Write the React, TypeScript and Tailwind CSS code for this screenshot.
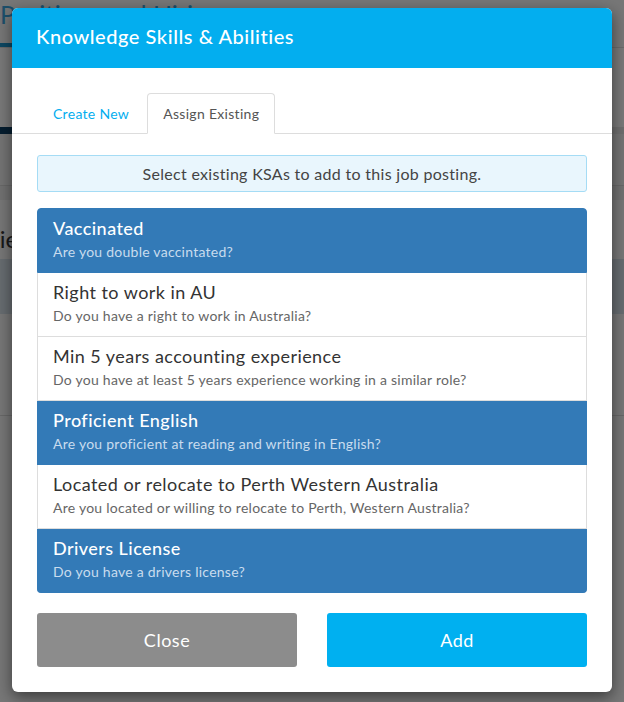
import React, { useState } from "react";

const ksas = [
  { title: "Vaccinated", question: "Are you double vaccintated?", selected: true },
  { title: "Right to work in AU", question: "Do you have a right to work in Australia?", selected: false },
  {
    title: "Min 5 years accounting experience",
    question: "Do you have at least 5 years experience working in a similar role?",
    selected: false,
  },
  {
    title: "Proficient English",
    question: "Are you proficient at reading and writing in English?",
    selected: true,
  },
  {
    title: "Located or relocate to Perth Western Australia",
    question: "Are you located or willing to relocate to Perth, Western Australia?",
    selected: false,
  },
  { title: "Drivers License", question: "Do you have a drivers license?", selected: true },
];

export default function App() {
  const [items, setItems] = useState(ksas);
  const [tab, setTab] = useState("existing");

  const toggle = (i: number) => {
    setItems(items.map((it, idx) => (idx === i ? { ...it, selected: !it.selected } : it)));
  };

  const tabClass = (active: boolean) =>
    active
      ? "-mb-px mr-[2px] rounded-t-[4px] border border-[#dddddd] border-b-white bg-white px-[15px] py-[10px] text-[14px] leading-[19px] tracking-[0.3px] text-[#555]"
      : "-mb-px mr-[2px] rounded-t-[4px] border border-transparent px-[15px] py-[10px] text-[14px] leading-[19px] tracking-[0.3px] text-[#03aeef]";

  return (
    <div className="relative h-[702px] w-[624px] overflow-hidden bg-[#eeeeee] font-['Lato',sans-serif]">
      {/* page behind the modal */}
      <div className="flex flex-col">
        <div className="h-[43px] overflow-hidden pt-[2px] text-[25px] leading-[24px] text-[#3a9fd6]">
          Positions and Hiring
        </div>
        <div className="flex h-[4px]">
          <div className="w-[140px] bg-[#1a8fc4]" />
        </div>
        <div className="h-[80px] border-t border-[#d5d5d5] bg-[#f2f2f2]" />
        <div className="flex h-[7px] bg-[#dddddd]">
          <div className="w-[140px] bg-[#0b3a5e]" />
        </div>
        <div className="h-[51px] bg-[#e8e8e8]" />
        <div className="h-[15px] border-t border-[#d0d0d0] bg-[#e2e2e2]" />
        <div className="h-[59px] overflow-hidden pt-[24px] text-[24px] leading-[30px] text-[#333]">
          <span className="-ml-[75px]">Vacancies</span>
        </div>
        <div className="h-[55px] bg-[#cfd8e0]" />
        <div className="h-[102px] border-b border-[#d0d0d0]" />
      </div>

      {/* overlay */}
      <div className="absolute inset-0 bg-black/50" />

      {/* modal */}
      <div className="absolute left-[12px] top-[8px] flex w-[600px] flex-col overflow-hidden rounded-[6px] bg-white shadow-[0_5px_15px_rgba(0,0,0,0.5)]">
        <div className="flex h-[60px] items-center bg-[#03aeef] px-[24px] pb-[5px]">
          <h2 className="text-[20px] font-medium leading-[24px] tracking-[0.55px] text-white">
            Knowledge Skills &amp; Abilities
          </h2>
        </div>

        <div className="flex border-b border-[#dddddd] pl-[25px] pt-[25px]">
          <button onClick={() => setTab("new")} className={tabClass(tab === "new")}>
            Create New
          </button>
          <button onClick={() => setTab("existing")} className={tabClass(tab === "existing")}>
            Assign Existing
          </button>
        </div>

        <div className="flex flex-col px-[25px] pb-[25px] pt-[21px]">
          <div className="rounded-[3px] border border-[#a5dcf5] bg-[#e9f6fd] py-[8px] text-center text-[16px] leading-[19px] tracking-[0.3px] text-[#444]">
            Select existing KSAs to add to this job posting.
          </div>

          <div className="mt-[16px] flex flex-col">
            {items.map((it, i) => (
              <button
                key={it.title}
                onClick={() => toggle(i)}
                className={
                  "flex h-[64px] flex-col border-x border-b px-[15px] pt-[8px] text-left first:h-[65px] first:rounded-t-[4px] first:border-t last:rounded-b-[4px] " +
                  (it.selected ? "border-[#337ab7] bg-[#337ab7]" : "border-[#dddddd] bg-white")
                }
              >
                <span
                  className={
                    "text-[18px] leading-[22px] tracking-[0.45px] " +
                    (it.selected ? "font-medium text-white" : "font-normal text-[#333]")
                  }
                >
                  {it.title}
                </span>
                <span
                  className={
                    "mt-[3px] text-[14px] leading-[20px] tracking-[0.25px] " +
                    (it.selected ? "text-[#c9dcee]" : "text-[#666]")
                  }
                >
                  {it.question}
                </span>
              </button>
            ))}
          </div>

          <div className="mt-[20px] grid grid-cols-2 gap-[30px]">
            <button className="h-[54px] rounded-[3px] bg-[#8c8c8c] text-[18px] tracking-[0.5px] text-white">
              Close
            </button>
            <button className="h-[54px] rounded-[3px] bg-[#00b0f0] text-[18px] tracking-[0.5px] text-white">
              Add
            </button>
          </div>
        </div>
      </div>
    </div>
  );
}
